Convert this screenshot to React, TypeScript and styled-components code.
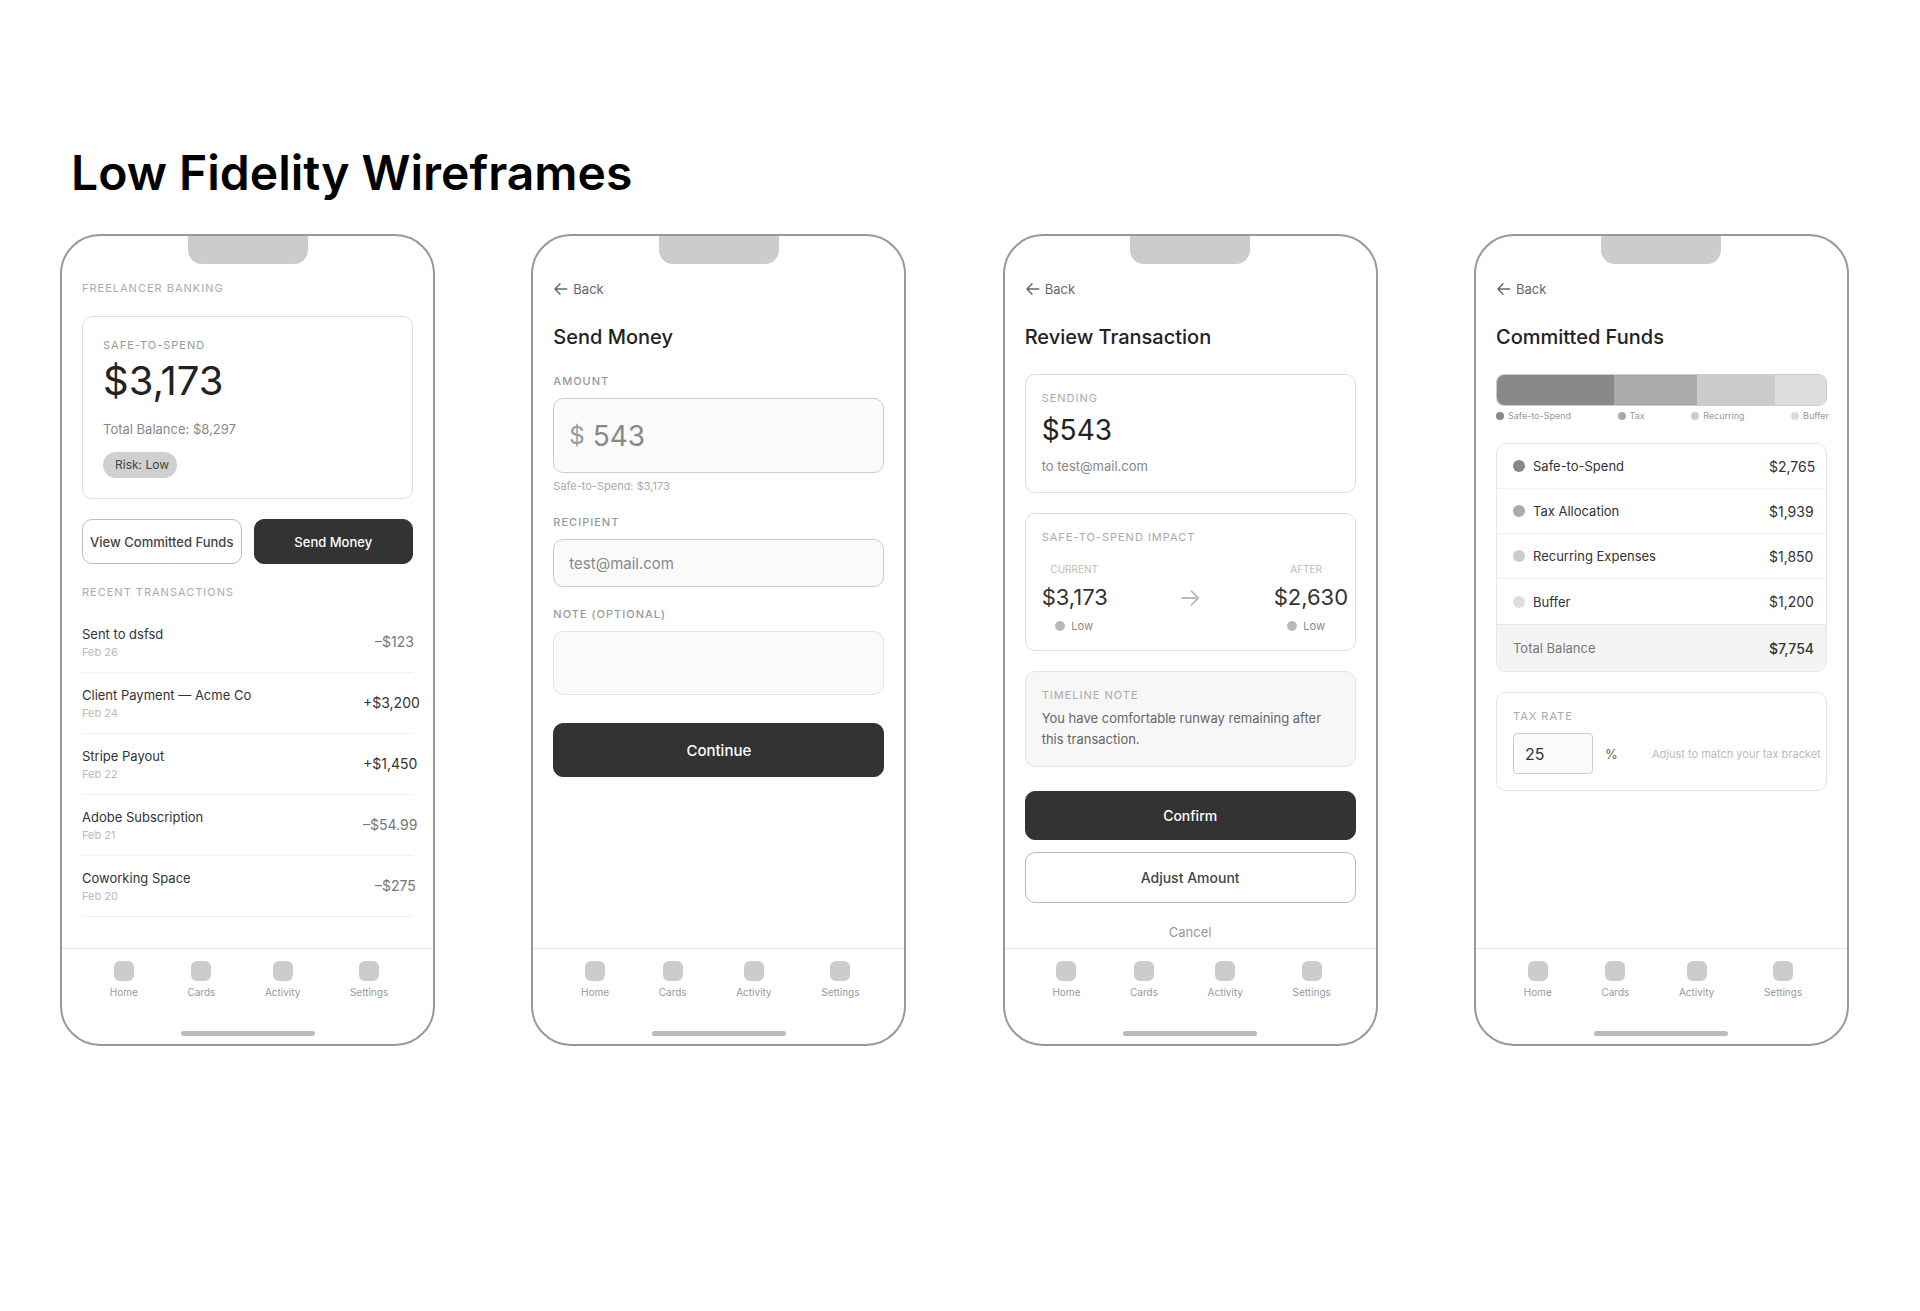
import React, { useId } from "react";
import styled, { createGlobalStyle } from "styled-components";

const GlobalStyle = createGlobalStyle`
  *, *::before, *::after { box-sizing: border-box; }
  body { margin: 0; background: #fff; color: #222; font-family: Inter, "Liberation Sans", sans-serif; }
  h1, h2, p, ul { margin: 0; padding: 0; }
  ul { list-style: none; }
  button, input, textarea { font-family: inherit; }
`;

/* ---------- page ---------- */

const Board = styled.main`
  padding: 143px 71px 120px 60px;
`;

const BoardTitle = styled.h1`
  padding-left: 11px;
  font-size: 48px;
  line-height: 59px;
  font-weight: 600;
  color: #000;
`;

const Phones = styled.div`
  display: flex;
  flex-wrap: wrap;
  justify-content: space-between;
  gap: 24px;
  margin-top: 32px;
`;

/* ---------- phone shell ---------- */

const PhoneFrame = styled.section`
  flex: 0 1 375px;
  display: flex;
  flex-direction: column;
  min-height: 812px;
  border: 2px solid #999;
  border-radius: 40px;
  overflow: hidden;
  background: #fff;
`;

const Notch = styled.div`
  align-self: center;
  flex: none;
  width: 120px;
  height: 28px;
  border-radius: 0 0 14px 14px;
  background: #ccc;
`;

const Screen = styled.div`
  flex: 1;
  display: flex;
  flex-direction: column;
  padding: 14px 20px 0;
`;

const BottomBar = styled.footer`
  display: flex;
  flex-direction: column;
  align-items: center;
  justify-content: space-between;
  height: 96px;
  padding: 12px 20px 8px;
  border-top: 1px solid #e5e5e5;
`;

const Tabs = styled.nav`
  display: flex;
  justify-content: space-around;
  width: 100%;
  padding-left: 3px;
`;

const Tab = styled.button`
  display: flex;
  flex-direction: column;
  align-items: center;
  gap: 4px;
  padding: 0;
  border: 0;
  background: none;
  font-size: 10px;
  line-height: 14px;
  color: #999;
`;

const TabIcon = styled.span`
  width: 20px;
  height: 20px;
  border-radius: 6px;
  background: #ccc;
`;

const HomeIndicator = styled.div`
  width: 134px;
  height: 5px;
  border-radius: 3px;
  background: #bbb;
`;

function Phone({ label, children }: { label: string; children: React.ReactNode }) {
  return (
    <PhoneFrame aria-label={label}>
      <Notch />
      <Screen>{children}</Screen>
      <BottomBar>
        <Tabs>
          {["Home", "Cards", "Activity", "Settings"].map((name) => (
            <Tab key={name} type="button">
              <TabIcon />
              {name}
            </Tab>
          ))}
        </Tabs>
        <HomeIndicator />
      </BottomBar>
    </PhoneFrame>
  );
}

/* ---------- shared parts ---------- */

const Overline = styled.p<{ $color?: string }>`
  font-size: 11px;
  line-height: 14px;
  letter-spacing: 1px;
  text-transform: uppercase;
  color: ${(p) => p.$color ?? "#aaa"};
`;

const BackButton = styled.button`
  align-self: flex-start;
  display: flex;
  align-items: center;
  gap: 4px;
  padding: 0;
  border: 0;
  background: none;
  font-size: 13px;
  line-height: 22px;
  color: #666;
`;

const ScreenTitle = styled.h2`
  margin: 22px 0;
  font-size: 20px;
  line-height: 30px;
  font-weight: 500;
  color: #222;
`;

const Card = styled.div<{ $muted?: boolean }>`
  padding: 16px;
  border: 1px solid ${(p) => (p.$muted ? "#e5e5e5" : "#ddd")};
  border-radius: 10px;
  background: ${(p) => (p.$muted ? "#f7f7f7" : "#fff")};
  & + & { margin-top: 20px; }
`;

const Button = styled.button<{ $primary?: boolean; $height: number; $size?: number }>`
  height: ${(p) => p.$height}px;
  padding: 0;
  border: 1px solid ${(p) => (p.$primary ? "#333" : "#bbb")};
  border-radius: 10px;
  background: ${(p) => (p.$primary ? "#333" : "#fff")};
  color: ${(p) => (p.$primary ? "#fff" : "#444")};
  font-size: ${(p) => p.$size ?? 14}px;
  font-weight: 500;
  white-space: nowrap;
`;

const Dot = styled.span<{ $size: number; $color: string }>`
  flex: none;
  width: ${(p) => p.$size}px;
  height: ${(p) => p.$size}px;
  border-radius: 50%;
  background: ${(p) => p.$color};
`;

function Header({ title }: { title: string }) {
  return (
    <>
      <BackButton type="button">
        <svg width="16" height="16" viewBox="0 0 16 16" fill="none" stroke="currentColor" strokeWidth="1.4" strokeLinecap="round" strokeLinejoin="round" aria-hidden="true">
          <path d="M13.7 8H2M7 2.8L2 8l5 5.2" />
        </svg>
        Back
      </BackButton>
      <ScreenTitle>{title}</ScreenTitle>
    </>
  );
}

/* ---------- home ---------- */

const AppName = styled(Overline)`
  line-height: 20px;
  margin-bottom: 18px;
`;

const BalanceCard = styled(Card)`
  display: flex;
  flex-direction: column;
  align-items: flex-start;
  padding: 20px;
`;

const BalanceLabel = styled(Overline)`
  line-height: 16px;
`;

const Balance = styled.p`
  margin-top: 4px;
  font-size: 40px;
  line-height: 48px;
  color: #222;
`;

const BalanceNote = styled.p`
  margin: 14px 0 13px;
  font-size: 13px;
  line-height: 20px;
  color: #888;
`;

const RiskPill = styled.span`
  padding: 0 8px 0 12px;
  border-radius: 13px;
  background: #d0d0d0;
  font-size: 12px;
  line-height: 26px;
  color: #444;
`;

const Actions = styled.div`
  display: grid;
  grid-template-columns: 1fr 1fr;
  gap: 12px;
  margin: 20px 0;
`;

const SectionTitle = styled(Overline)`
  line-height: 16px;
`;

const Transactions = styled.ul`
  margin-top: 12px;
`;

const Transaction = styled.li`
  display: flex;
  align-items: center;
  justify-content: space-between;
  padding: 12px 0;
  border-bottom: 1px solid #f0f0f0;
`;

const Payee = styled.p`
  font-size: 13px;
  line-height: 20px;
  color: #333;
`;

const When = styled.p`
  font-size: 11px;
  line-height: 16px;
  color: #bbb;
`;

const Amount = styled.span<{ $incoming: boolean; $wide: boolean }>`
  width: ${(p) => (p.$wide ? 50 : 38)}px;
  font-size: 14px;
  line-height: 20px;
  white-space: nowrap;
  color: ${(p) => (p.$incoming ? "#333" : "#777")};
`;

const transactions = [
  { payee: "Sent to dsfsd", when: "Feb 26", amount: "–$123" },
  { payee: "Client Payment — Acme Co", when: "Feb 24", amount: "+$3,200" },
  { payee: "Stripe Payout", when: "Feb 22", amount: "+$1,450" },
  { payee: "Adobe Subscription", when: "Feb 21", amount: "–$54.99" },
  { payee: "Coworking Space", when: "Feb 20", amount: "–$275" },
];

function HomeScreen() {
  return (
    <Phone label="Home">
      <AppName>Freelancer Banking</AppName>
      <BalanceCard>
        <BalanceLabel $color="#999">Safe-to-Spend</BalanceLabel>
        <Balance>$3,173</Balance>
        <BalanceNote>Total Balance: $8,297</BalanceNote>
        <RiskPill>Risk: Low</RiskPill>
      </BalanceCard>
      <Actions>
        <Button type="button" $height={45} $size={13}>View Committed Funds</Button>
        <Button type="button" $height={45} $size={13} $primary>Send Money</Button>
      </Actions>
      <SectionTitle>Recent Transactions</SectionTitle>
      <Transactions>
        {transactions.map((t) => (
          <Transaction key={t.payee}>
            <div>
              <Payee>{t.payee}</Payee>
              <When>{t.when}</When>
            </div>
            <Amount $incoming={t.amount.startsWith("+")} $wide={t.amount.length > 5}>
              {t.amount}
            </Amount>
          </Transaction>
        ))}
      </Transactions>
    </Phone>
  );
}

/* ---------- send money ---------- */

const Form = styled.form`
  display: flex;
  flex-direction: column;
  gap: 20px;
`;

const Field = styled.div`
  display: flex;
  flex-direction: column;
`;

const FieldLabel = styled.label`
  margin-bottom: 10px;
  font-size: 11px;
  line-height: 14px;
  font-weight: 500;
  letter-spacing: 1px;
  text-transform: uppercase;
  color: #999;
`;

const AmountBox = styled.div`
  display: flex;
  align-items: center;
  gap: 8px;
  height: 75px;
  padding: 0 15px;
  border: 1px solid #ccc;
  border-radius: 10px;
  background: #fafafa;
  font-size: 24px;
  color: #999;
`;

const AmountInput = styled.input`
  flex: 1;
  min-width: 0;
  padding: 0;
  border: 0;
  background: none;
  font-size: 28px;
  color: #888;
`;

const TextInput = styled.input`
  height: 48px;
  padding: 0 15px;
  border: 1px solid #ccc;
  border-radius: 10px;
  background: #fafafa;
  font-size: 15px;
  color: #888;
`;

const NoteInput = styled.textarea`
  height: 64px;
  padding: 12px 15px;
  border: 1px solid #e5e5e5;
  border-radius: 10px;
  background: #fafafa;
  font-size: 13px;
  color: #888;
  resize: none;
`;

const FieldHelp = styled.p`
  margin-top: 4px;
  font-size: 11px;
  line-height: 18px;
  color: #aaa;
`;

const Submit = styled(Button)`
  margin-top: 8px;
`;

function SendScreen() {
  const id = useId();
  return (
    <Phone label="Send Money">
      <Header title="Send Money" />
      <Form onSubmit={(e) => e.preventDefault()}>
        <Field>
          <FieldLabel htmlFor={id + "amount"}>Amount</FieldLabel>
          <AmountBox>
            $
            <AmountInput id={id + "amount"} inputMode="decimal" defaultValue="543" />
          </AmountBox>
          <FieldHelp>Safe-to-Spend: $3,173</FieldHelp>
        </Field>
        <Field>
          <FieldLabel htmlFor={id + "to"}>Recipient</FieldLabel>
          <TextInput id={id + "to"} type="email" defaultValue="test@mail.com" />
        </Field>
        <Field>
          <FieldLabel htmlFor={id + "note"}>Note (optional)</FieldLabel>
          <NoteInput id={id + "note"} />
        </Field>
        <Submit type="submit" $height={54} $size={15} $primary>Continue</Submit>
      </Form>
    </Phone>
  );
}

/* ---------- review ---------- */

const SendingAmount = styled.p`
  margin: 7px 0 8px;
  font-size: 28px;
  line-height: 36px;
  color: #222;
`;

const Recipient = styled.p`
  font-size: 13px;
  line-height: 20px;
  color: #888;
`;

const Impact = styled.div`
  display: flex;
  align-items: center;
  justify-content: space-between;
  margin-top: 18px;
  color: #bbb;
`;

const ImpactColumn = styled.div`
  display: flex;
  flex-direction: column;
  gap: 7px;
  width: 65px;
`;

const ImpactLabel = styled.p`
  font-size: 10px;
  line-height: 14px;
  text-align: center;
  color: #bbb;
`;

const ImpactValue = styled.p`
  font-size: 22px;
  line-height: 28px;
  white-space: nowrap;
  color: #333;
`;

const ImpactRisk = styled.p`
  display: flex;
  align-items: center;
  justify-content: center;
  gap: 6px;
  font-size: 11px;
  line-height: 16px;
  color: #888;
`;

const NoteText = styled.p`
  margin-top: 6px;
  font-size: 13px;
  line-height: 21px;
  color: #666;
`;

const ReviewActions = styled.div`
  display: flex;
  flex-direction: column;
  gap: 12px;
  margin-top: 24px;
`;

const CancelButton = styled.button`
  height: 33px;
  padding: 0;
  border: 0;
  background: none;
  font-size: 13px;
  color: #999;
`;

function ImpactSide({ label, value }: { label: string; value: string }) {
  return (
    <ImpactColumn>
      <ImpactLabel>{label}</ImpactLabel>
      <ImpactValue>{value}</ImpactValue>
      <ImpactRisk>
        <Dot $size={10} $color="#bbb" />
        Low
      </ImpactRisk>
    </ImpactColumn>
  );
}

function ReviewScreen() {
  return (
    <Phone label="Review Transaction">
      <Header title="Review Transaction" />
      <Card>
        <Overline>Sending</Overline>
        <SendingAmount>$543</SendingAmount>
        <Recipient>to test@mail.com</Recipient>
      </Card>
      <Card>
        <Overline>Safe-to-Spend Impact</Overline>
        <Impact>
          <ImpactSide label="CURRENT" value="$3,173" />
          <svg width="20" height="20" viewBox="0 0 20 20" fill="none" stroke="currentColor" strokeWidth="1.8" strokeLinecap="round" strokeLinejoin="round" aria-hidden="true">
            <path d="M2.3 10h16M11.4 3.1L18.3 10l-6.9 6.9" />
          </svg>
          <ImpactSide label="AFTER" value="$2,630" />
        </Impact>
      </Card>
      <Card $muted>
        <Overline>Timeline Note</Overline>
        <NoteText>You have comfortable runway remaining after this transaction.</NoteText>
      </Card>
      <ReviewActions>
        <Button type="button" $height={49} $primary>Confirm</Button>
        <Button type="button" $height={51}>Adjust Amount</Button>
        <CancelButton type="button">Cancel</CancelButton>
      </ReviewActions>
    </Phone>
  );
}

/* ---------- committed funds ---------- */

const funds = [
  { name: "Safe-to-Spend", short: "Safe-to-Spend", value: 2765, color: "#888" },
  { name: "Tax Allocation", short: "Tax", value: 1939, color: "#aaa" },
  { name: "Recurring Expenses", short: "Recurring", value: 1850, color: "#ccc" },
  { name: "Buffer", short: "Buffer", value: 1200, color: "#ddd" },
];

const money = (n: number) => "$" + n.toLocaleString("en-US");

const StackBar = styled.div`
  display: flex;
  height: 32px;
  border: 1px solid #ccc;
  border-radius: 8px;
  overflow: hidden;
`;

const StackPart = styled.div<{ $color: string }>`
  background: ${(p) => p.$color};
`;

const Legend = styled.ul`
  display: flex;
  justify-content: space-between;
  margin: 4px -2px 0 0;
`;

const LegendItem = styled.li`
  display: flex;
  align-items: center;
  gap: 4px;
  font-size: 9px;
  line-height: 12px;
  color: #999;
`;

const FundsCard = styled.div`
  margin: 21px 0 20px;
  border: 1px solid #e5e5e5;
  border-radius: 10px;
  overflow: hidden;
`;

const FundsTable = styled.table`
  width: 100%;
  border-spacing: 0;
  font-size: 13px;
  color: #333;
  th, td {
    height: 45px;
    padding: 0;
    border-bottom: 1px solid #f0f0f0;
    text-align: left;
    font-weight: 400;
  }
  tbody tr:last-child > * {
    height: 46px;
    border-bottom-color: #e5e5e5;
  }
  tfoot th, tfoot td {
    height: 46px;
    border-bottom: 0;
    background: #f4f4f4;
  }
  tfoot th { color: #777; }
  th > span {
    display: flex;
    align-items: center;
    gap: 8px;
    padding-left: 16px;
  }
  td {
    width: 57px;
    font-size: 14px;
  }
  tfoot td { font-weight: 500; }
`;

const TaxCard = styled(Card)`
  border-color: #e5e5e5;
`;

const TaxLabel = styled.label`
  display: block;
  margin-bottom: 10px;
  font-size: 11px;
  line-height: 14px;
  letter-spacing: 1px;
  text-transform: uppercase;
  color: #aaa;
`;

const TaxRow = styled.div`
  display: flex;
  align-items: center;
  gap: 12px;
  font-size: 13px;
  color: #666;
`;

const TaxInput = styled.input`
  width: 80px;
  height: 41px;
  padding: 0 11px;
  border: 1px solid #ccc;
  border-radius: 4px;
  background: #fafafa;
  font-size: 16px;
  color: #333;
`;

const TaxHint = styled.span`
  width: 158px;
  margin-left: auto;
  font-size: 11px;
  white-space: nowrap;
  color: #bbb;
`;

function FundsScreen() {
  const id = useId();
  const total = funds.reduce((sum, f) => sum + f.value, 0);
  return (
    <Phone label="Committed Funds">
      <Header title="Committed Funds" />
      <StackBar>
        {funds.map((f) => (
          <StackPart key={f.name} $color={f.color} style={{ width: `${(f.value / total) * 100}%` }} />
        ))}
      </StackBar>
      <Legend>
        {funds.map((f) => (
          <LegendItem key={f.name}>
            <Dot $size={8} $color={f.color} />
            {f.short}
          </LegendItem>
        ))}
      </Legend>
      <FundsCard>
        <FundsTable>
          <tbody>
            {funds.map((f) => (
              <tr key={f.name}>
                <th scope="row">
                  <span>
                    <Dot $size={12} $color={f.color} />
                    {f.name}
                  </span>
                </th>
                <td>{money(f.value)}</td>
              </tr>
            ))}
          </tbody>
          <tfoot>
            <tr>
              <th scope="row">
                <span>Total Balance</span>
              </th>
              <td>{money(total)}</td>
            </tr>
          </tfoot>
        </FundsTable>
      </FundsCard>
      <TaxCard>
        <TaxLabel htmlFor={id + "tax"}>Tax Rate</TaxLabel>
        <TaxRow>
          <TaxInput id={id + "tax"} inputMode="numeric" defaultValue="25" />
          %
          <TaxHint>Adjust to match your tax bracket</TaxHint>
        </TaxRow>
      </TaxCard>
    </Phone>
  );
}

export default function App() {
  return (
    <>
      <GlobalStyle />
      <Board>
        <BoardTitle>Low Fidelity Wireframes</BoardTitle>
        <Phones>
          <HomeScreen />
          <SendScreen />
          <ReviewScreen />
          <FundsScreen />
        </Phones>
      </Board>
    </>
  );
}
